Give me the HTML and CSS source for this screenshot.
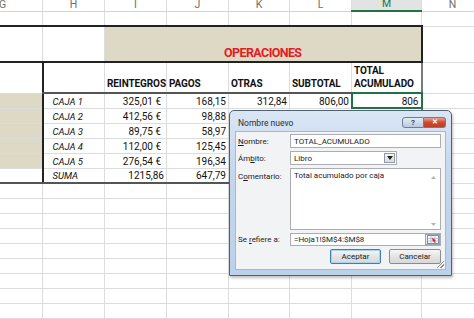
FILE: index.html
```html
<!DOCTYPE html>
<html lang="es">
<head>
    <meta charset="UTF-8">
    <title>Nombre nuevo</title>
    <link rel="stylesheet" href="styles.css">
</head>
<body>

<div class="sheet">
    <table class="grid">
        <colgroup>
            <col class="c-g"><col class="c-std"><col class="c-std"><col class="c-std">
            <col class="c-k"><col class="c-std"><col class="c-m"><col class="c-std">
        </colgroup>
        <tr class="r-cols">
            <th>G</th><th>H</th><th>I</th><th>J</th><th>K</th><th>L</th><th class="sel">M</th><th>N</th>
        </tr>
        <tr><td></td><td></td><td></td><td></td><td></td><td></td><td></td><td></td></tr>
        <tr class="r-title">
            <td class="tb"></td><td class="tb"></td>
            <td class="tb title" colspan="5">OPERACIONES</td>
            <td></td>
        </tr>
        <tr class="r-head">
            <td></td>
            <td class="lb hb"></td>
            <td class="hb hd">REINTEGROS</td>
            <td class="hb hd">PAGOS</td>
            <td class="hb hd">OTRAS</td>
            <td class="hb hd">SUBTOTAL</td>
            <td class="hb hd rb">TOTAL<br>ACUMULADO</td>
            <td></td>
        </tr>
        <tr>
            <td class="tan"></td><td class="lb name">CAJA 1</td><td class="num eur">325,01 €</td>
            <td class="num">168,15</td><td class="num">312,84</td><td class="num">806,00</td>
            <td class="num rb active">806</td><td></td>
        </tr>
        <tr>
            <td class="tan"></td><td class="lb name">CAJA 2</td><td class="num eur">412,56 €</td>
            <td class="num">98,88</td><td></td><td></td><td class="rb"></td><td></td>
        </tr>
        <tr>
            <td class="tan"></td><td class="lb name">CAJA 3</td><td class="num eur">89,75 €</td>
            <td class="num">58,97</td><td></td><td></td><td class="rb"></td><td></td>
        </tr>
        <tr>
            <td class="tan"></td><td class="lb name">CAJA 4</td><td class="num eur">112,00 €</td>
            <td class="num">125,45</td><td></td><td></td><td class="rb"></td><td></td>
        </tr>
        <tr>
            <td class="tan"></td><td class="lb name">CAJA 5</td><td class="num eur">276,54 €</td>
            <td class="num">196,34</td><td></td><td></td><td class="rb"></td><td></td>
        </tr>
        <tr>
            <td class="fb"></td><td class="lb fb name">SUMA</td><td class="num fb">1215,86</td>
            <td class="num fb">647,79</td><td class="fb"></td><td class="fb"></td><td class="fb rb"></td><td></td>
        </tr>
        <tr><td></td><td></td><td></td><td></td><td></td><td></td><td></td><td></td></tr>
        <tr><td></td><td></td><td></td><td></td><td></td><td></td><td></td><td></td></tr>
        <tr><td></td><td></td><td></td><td></td><td></td><td></td><td></td><td></td></tr>
        <tr><td></td><td></td><td></td><td></td><td></td><td></td><td></td><td></td></tr>
        <tr><td></td><td></td><td></td><td></td><td></td><td></td><td></td><td></td></tr>
        <tr><td></td><td></td><td></td><td></td><td></td><td></td><td></td><td></td></tr>
        <tr><td></td><td></td><td></td><td></td><td></td><td></td><td></td><td></td></tr>
        <tr><td></td><td></td><td></td><td></td><td></td><td></td><td></td><td></td></tr>
        <tr><td></td><td></td><td></td><td></td><td></td><td></td><td></td><td></td></tr>
        <tr><td></td><td></td><td></td><td></td><td></td><td></td><td></td><td></td></tr>
    </table>
</div>

<div class="dialog">
    <div class="dialog-bar">
        <span class="dialog-title">Nombre nuevo</span>
        <span class="bar-btn help">?</span>
        <span class="bar-btn close">&#10005;</span>
    </div>
    <div class="dialog-body">
        <label class="lbl"><u>N</u>ombre:</label>
        <div class="field">TOTAL_ACUMULADO</div>

        <label class="lbl">Ám<u>b</u>ito:</label>
        <div class="field select">
            <span>Libro</span>
            <span class="drop">
                <svg width="6" height="4" viewBox="0 0 6 4"><path d="M0 0h6L3 4z" fill="#222"/></svg>
            </span>
        </div>

        <label class="lbl top">C<u>o</u>mentario:</label>
        <div class="field area">
            <span>Total acumulado por caja</span>
            <span class="scroll">
                <svg width="5" height="3" viewBox="0 0 5 3"><path d="M0 3h5L2.5 0z" fill="#b5b5b5"/></svg>
                <svg width="5" height="3" viewBox="0 0 5 3"><path d="M0 0h5L2.5 3z" fill="#b5b5b5"/></svg>
            </span>
        </div>

        <label class="lbl">Se <u>r</u>efiere a:</label>
        <div class="field ref">
            <span>=Hoja1!$M$4:$M$8</span>
            <span class="pick">
                <svg width="12" height="9" viewBox="0 0 12 9">
                    <rect x="0.5" y="0.5" width="11" height="8" fill="#fff" stroke="#7c8ea6"/>
                    <path d="M0.5 3.5h11M0.5 6h11M4 0.5v8M8 0.5v8" stroke="#a9b6c8" stroke-width="0.8"/>
                    <path d="M5 2.5l4 3-1.3.3 1 1.7-.8.4-1-1.7-1 .9z" fill="#d3262c"/>
                </svg>
            </span>
        </div>

        <div class="actions">
            <span class="btn default">Aceptar</span>
            <span class="btn">Cancelar</span>
        </div>
        <span class="grip"></span>
    </div>
</div>

</body>
</html>
```

FILE: styles.css
```css
* {
    margin: 0;
    padding: 0;
    box-sizing: border-box;
}

body {
    width: 474px;
    height: 319px;
    overflow: hidden;
    position: relative;
    background: #fff;
    font-family: Roboto, 'Liberation Sans', sans-serif;
}

/* ---------- spreadsheet ---------- */

.sheet {
    margin: -3px 0 0 -38px;
}

.grid {
    border-collapse: collapse;
    table-layout: fixed;
    width: 521px;
    font-size: 10px;
    color: #111;
}

.c-g { width: 80px; }
.c-std { width: 62px; }
.c-k { width: 61px; }
.c-m { width: 70px; }

.grid tr {
    height: 15px;
}

.grid td,
.grid th {
    border: 1px solid #dadcdd;
    padding: 0 2px;
    white-space: nowrap;
    overflow: hidden;
    vertical-align: bottom;
    line-height: 13px;
}

.grid .r-cols {
    height: 14px;
}

.grid th {
    font-weight: normal;
    font-size: 10.5px;
    color: #6f6f6f;
    text-align: center;
    vertical-align: bottom;
    border-top: 0;
    border-bottom: 1px solid #d4d4d4;
    line-height: 12px;
}

.grid th.sel {
    background: #e2e4e3;
    color: #217346;
    border-bottom: 2px solid #217346;
}

.grid .r-title {
    height: 36px;
}

.grid .r-head {
    height: 31px;
}

.tb {
    border-top: 2px solid #222 !important;
    border-bottom: 2px solid #222 !important;
}

.title {
    background: #ddd9c4;
    border-right: 2px solid #222 !important;
    text-align: center;
    color: #e31b23;
    font-weight: bold;
    font-size: 12.5px;
    letter-spacing: -0.6px;
    line-height: 14px !important;
    padding-bottom: 1px !important;
}

.hd {
    font-weight: bold;
    font-size: 10px;
    letter-spacing: -0.1px;
    padding-bottom: 2px !important;
}

.hb {
    border-bottom: 2px solid #555 !important;
}

.fb {
    border-bottom: 2px solid #555 !important;
}

.lb {
    border-left: 2px solid #222 !important;
}

.rb {
    border-right: 2px solid #7a7a7a !important;
}

.tan {
    background: #ddd9c4;
}

.name {
    font-style: italic;
    padding-left: 9px !important;
    font-size: 9.5px;
}

.num {
    text-align: right;
}

.num.eur {
    padding-right: 5px;
}

.active {
    outline: 2px solid #217346;
    outline-offset: -1px;
}

/* ---------- dialog ---------- */

.dialog {
    position: absolute;
    left: 229px;
    top: 110px;
    width: 223px;
    height: 166px;
    border: 1px solid #4f6173;
    border-radius: 5px 5px 0 0;
    background: linear-gradient(#d9e6f4, #c3d6ec 40%, #bcd1ea);
    padding: 0 5px 5px;
    box-shadow: 1px 2px 3px rgba(0, 0, 0, 0.25);
    display: flex;
    flex-direction: column;
    font-size: 8px;
    color: #1b1b1b;
}

.dialog-bar {
    height: 20px;
    display: flex;
    align-items: center;
    padding-left: 3px;
}

.dialog-title {
    flex: 1;
    font-size: 8.5px;
    color: #1e2d3d;
    padding-top: 3px;
}

.bar-btn {
    height: 11px;
    display: flex;
    align-items: center;
    justify-content: center;
    border: 1px solid #6d7e93;
    font-size: 8px;
    font-weight: bold;
    margin-top: 2px;
}

.help {
    width: 22px;
    border-radius: 3px 0 0 3px;
    background: linear-gradient(#e3ecf6, #b9cbe1);
    color: #3b4e66;
}

.close {
    width: 22px;
    border-left: 0;
    border-radius: 0 3px 3px 0;
    background: linear-gradient(#e9a493, #c94a33 50%, #c23d27);
    color: #fff;
    font-size: 7px;
}

.dialog-body {
    flex: 1;
    position: relative;
    background: #f2f3f4;
    border: 1px solid #a8b8cc;
    padding: 2px 4px 0 2px;
    display: grid;
    grid-template-columns: 52px 151px;
    grid-template-rows: 14px 14px 62px 13px 15px;
    row-gap: 3px;
}

.lbl {
    align-self: center;
    white-space: nowrap;
}

.lbl.top {
    align-self: start;
    padding-top: 4px;
}

.field {
    background: #fff;
    border: 1px solid #abadb3;
    padding: 0 3px;
    display: flex;
    align-items: center;
    white-space: nowrap;
}

.field.select {
    width: 107px;
    justify-content: space-between;
    padding-right: 1px;
}

.drop {
    width: 11px;
    height: 10px;
    border: 1px solid #8f9aa8;
    background: linear-gradient(#f4f4f4, #dcdcdc);
    display: flex;
    align-items: center;
    justify-content: center;
}

.field.area {
    align-items: flex-start;
    justify-content: space-between;
    padding-top: 2px;
    padding-right: 2px;
}

.scroll {
    height: 100%;
    display: flex;
    flex-direction: column;
    justify-content: space-between;
    padding: 5px 2px 3px;
}

.field.ref {
    justify-content: space-between;
    padding-right: 0;
}

.pick {
    width: 15px;
    height: 11px;
    border: 1px solid #9aa6b5;
    background: linear-gradient(#f7f7f7, #dedede);
    display: flex;
    align-items: center;
    justify-content: center;
}

.actions {
    grid-column: 1 / 3;
    display: flex;
    justify-content: flex-end;
    gap: 8px;
}

.btn {
    width: 52px;
    display: flex;
    align-items: center;
    justify-content: center;
    border: 1px solid #8c8c8c;
    border-radius: 2px;
    background: linear-gradient(#f6f6f6, #e4e4e4 50%, #d8d8d8);
}

.btn.default {
    width: 51px;
    border-color: #3d7fb8;
    box-shadow: inset 0 0 0 1px #a8d4f3;
}

.grip {
    position: absolute;
    right: 1px;
    bottom: 1px;
    width: 7px;
    height: 7px;
    background: linear-gradient(135deg, transparent 45%, #8c8c8c 45%, #8c8c8c 55%, transparent 55%, transparent 70%, #8c8c8c 70%, #8c8c8c 80%, transparent 80%);
}
```
